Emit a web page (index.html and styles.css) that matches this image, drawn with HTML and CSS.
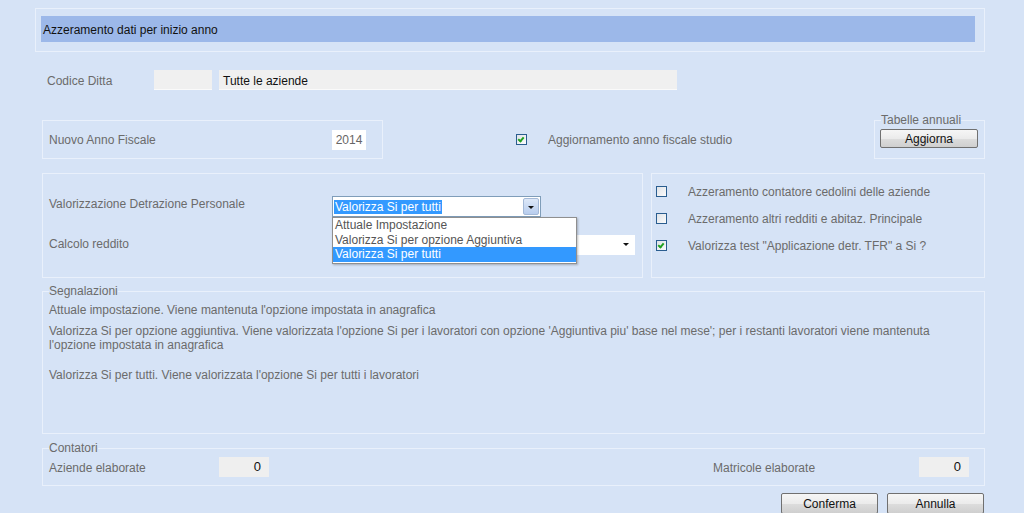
FILE: index.html
```html
<!DOCTYPE html>
<html lang="it">
<head>
    <meta charset="UTF-8">
    <meta name="viewport" content="width=device-width, initial-scale=1.0">
    <title>Azzeramento dati per inizio anno</title>
    <link rel="stylesheet" href="styles.css">
</head>
<body>
    <div class="page">
        <div class="title-panel">
            <div class="title-bar">Azzeramento dati per inizio anno</div>
        </div>

        <div class="row codice-row">
            <span class="label codice-label">Codice Ditta</span>
            <div class="field field-code"></div>
            <div class="field field-name">Tutte le aziende</div>
        </div>

        <div class="row anno-row">
            <div class="panel anno-panel">
                <span class="label">Nuovo Anno Fiscale</span>
                <div class="field-white">2014</div>
            </div>
            <div class="check-item anno-check">
                <span class="checkbox checked"></span>
                <span class="label">Aggiornamento anno fiscale studio</span>
            </div>
            <fieldset class="group tabelle">
                <legend>Tabelle annuali</legend>
                <button class="btn btn-aggiorna">Aggiorna</button>
            </fieldset>
        </div>

        <div class="row options-row">
            <div class="panel options-left">
                <div class="opt-line opt-first">
                    <span class="label opt-label">Valorizzazione Detrazione Personale</span>
                    <div class="combo">
                        <span class="combo-value"><span class="sel">Valorizza Si per tutti</span></span>
                        <span class="combo-arrow"></span>
                        <ul class="dropdown">
                            <li>Attuale Impostazione</li>
                            <li>Valorizza Si per opzione Aggiuntiva</li>
                            <li class="active">Valorizza Si per tutti</li>
                        </ul>
                    </div>
                </div>
                <div class="opt-line opt-second">
                    <span class="label opt-label">Calcolo reddito</span>
                    <div class="combo-flat"><span class="flat-arrow"></span></div>
                </div>
            </div>
            <div class="panel options-right">
                <div class="check-item"><span class="checkbox"></span><span class="label">Azzeramento contatore cedolini delle aziende</span></div>
                <div class="check-item"><span class="checkbox"></span><span class="label">Azzeramento altri redditi e abitaz. Principale</span></div>
                <div class="check-item"><span class="checkbox checked"></span><span class="label">Valorizza test "Applicazione detr. TFR" a Si ?</span></div>
            </div>
        </div>

        <fieldset class="group segnalazioni">
            <legend>Segnalazioni</legend>
            <p class="note n1">Attuale impostazione. Viene mantenuta l'opzione impostata in anagrafica</p>
            <p class="note n2">Valorizza Si per opzione aggiuntiva. Viene valorizzata l'opzione Si per i lavoratori con opzione 'Aggiuntiva piu' base nel mese'; per i restanti lavoratori viene mantenuta<br>l'opzione impostata in anagrafica</p>
            <p class="note">Valorizza Si per tutti. Viene valorizzata l'opzione Si per tutti i lavoratori</p>
        </fieldset>

        <fieldset class="group contatori">
            <legend>Contatori</legend>
            <div class="count-row">
                <span class="label count-label">Aziende elaborate</span>
                <div class="field-num">0</div>
                <span class="label count-label2">Matricole elaborate</span>
                <div class="field-num">0</div>
            </div>
        </fieldset>

        <div class="actions">
            <button class="btn btn-action">Conferma</button>
            <button class="btn btn-action">Annulla</button>
        </div>
    </div>
</body>
</html>
```
FILE: styles.css
```css
body {
    margin: 0;
    background: #d6e3f6;
    font-family: "Liberation Sans", Arial, sans-serif;
    font-size: 12px;
    color: #6b6b6b;
    overflow: hidden;
}
.page {
    padding: 8px 39px 0 35px;
}
.label {
    color: #6b6b6b;
    white-space: nowrap;
}

/* titolo */
.title-panel {
    border: 1px solid #e9f0fb;
    padding: 7px 9px 9px 5px;
}
.title-bar {
    height: 26px;
    line-height: 29px;
    background: #9cb8e9;
    color: #111;
    padding-left: 2px;
}

.row {
    display: flex;
}

/* codice ditta */
.codice-row {
    margin-top: 18px;
    margin-left: 12px;
    height: 20px;
    align-items: center;
}
.codice-label {
    width: 107px;
    padding-top: 2px;
}
.field {
    height: 19px;
    line-height: 22px;
    background: #f0f0f0;
    border-bottom: 1px solid #fafafa;
    color: #111;
}
.field-code {
    width: 58px;
}
.field-name {
    width: 454px;
    margin-left: 7px;
    padding-left: 4px;
}

/* pannelli */
.panel {
    border: 1px solid #e9f0fb;
    box-sizing: border-box;
}
.anno-row {
    margin-top: 30px;
    margin-left: 7px;
    align-items: flex-start;
}
.anno-panel {
    width: 341px;
    height: 39px;
    display: flex;
    align-items: center;
    padding-left: 6px;
}
.anno-panel .label {
    width: 283px;
}
.field-white {
    width: 34px;
    height: 20px;
    line-height: 20px;
    background: #fff;
    text-align: center;
    color: #666;
}
.anno-check {
    margin-left: 133px;
    margin-top: 14px;
}

.check-item {
    display: flex;
    align-items: center;
    height: 11px;
}
.checkbox {
    width: 9px;
    height: 9px;
    border: 1px solid #2a5d8f;
    background: linear-gradient(135deg, #dfe3e8, #fbfbfb);
    margin-right: 21px;
    position: relative;
    flex-shrink: 0;
}
.checkbox.checked::after {
    content: "";
    position: absolute;
    left: 2px;
    top: 1px;
    width: 2px;
    height: 4px;
    border: solid #21a121;
    border-width: 0 2px 2px 0;
    transform: rotate(40deg);
}

fieldset.group {
    margin: 0;
    padding: 0;
    border: 1px solid #e9f0fb;
    min-width: 0;
}
fieldset.group legend {
    padding: 0;
    margin-left: 0;
    line-height: 14px;
    color: #6b6b6b;
}
.tabelle {
    margin-left: auto !important;
    margin-top: -7px !important;
    width: 111px;
    box-sizing: border-box;
    padding: 2px 5px 10px 5px !important;
}
.tabelle legend {
    margin-left: 1px !important;
}

.btn {
    font-family: "Liberation Sans", Arial, sans-serif;
    font-size: 12px;
    color: #111;
    border: 1px solid #707070;
    border-radius: 2px;
    background: linear-gradient(#f6f6f6 0%, #ebebeb 50%, #dddddd 51%, #cfcfcf 100%);
    padding: 0;
    cursor: pointer;
}
.btn-aggiorna {
    width: 98px;
    height: 19px;
    display: block;
}

/* opzioni */
.options-row {
    margin-top: 14px;
    margin-left: 7px;
    gap: 8px;
}
.options-left {
    width: 601px;
    height: 105px;
    padding: 22px 0 0 6px;
}
.opt-line {
    display: flex;
    align-items: center;
}
.opt-label {
    width: 283px;
}
.opt-first {
    height: 21px;
    position: relative;
    z-index: 2;
}
.opt-first .opt-label {
    padding-bottom: 5px;
}
.opt-second {
    margin-top: 18px;
    height: 20px;
}
.opt-second .opt-label {
    padding-bottom: 2px;
}
.combo {
    position: relative;
    width: 209px;
    height: 21px;
    box-sizing: border-box;
    border: 1px solid #7f9db9;
    background: #fff;
    display: flex;
}
.combo-value {
    flex: 1;
    padding: 3px 0 0 1px;
}
.sel {
    background: #3399ff;
    color: #fff;
    padding: 0 1px;
}
.combo-arrow {
    width: 14px;
    margin: 1px;
    border: 1px solid #a4b9d7;
    border-radius: 2px;
    background: linear-gradient(#dde8f8, #b8cdee);
    position: relative;
}
.combo-arrow::after,
.flat-arrow::after {
    content: "";
    position: absolute;
    left: 4px;
    top: 7px;
    border-left: 3px solid transparent;
    border-right: 3px solid transparent;
    border-top: 3px solid #111;
}
.dropdown {
    position: absolute;
    left: -1px;
    top: 20px;
    width: 245px;
    margin: 0;
    padding: 0 0 1px 0;
    list-style: none;
    background: #fff;
    border: 1px solid #8f8f8f;
    box-sizing: border-box;
    box-shadow: 1px 1px 2px rgba(0, 0, 0, 0.25);
    color: #555;
}
.dropdown li {
    line-height: 14.5px;
    padding-left: 2px;
}
.dropdown li.active {
    background: #3399ff;
    color: #fff;
}
.combo-flat {
    width: 303px;
    height: 20px;
    background: #fff;
    position: relative;
}
.flat-arrow {
    position: absolute;
    right: 8px;
    top: 1px;
    width: 8px;
    height: 16px;
}

.options-right {
    width: 334px;
    height: 105px;
    padding: 12px 0 0 4px;
    display: flex;
    flex-direction: column;
    gap: 16px;
}
.options-right .checkbox {
    margin-right: 21px;
}

/* segnalazioni */
.segnalazioni {
    margin-top: 6px !important;
    margin-left: 7px !important;
    height: 150px;
    box-sizing: border-box;
    padding: 5px 0 0 6px !important;
}
.note {
    margin: 0;
    line-height: 14px;
    color: #6b6b6b;
}
.n1 {
    margin-bottom: 7px;
}
.n2 {
    margin-bottom: 16px;
}

/* contatori */
.contatori {
    margin-top: 7px !important;
    margin-left: 7px !important;
    height: 45px;
    box-sizing: border-box;
    padding: 2px 15px 0 6px !important;
}
.count-row {
    display: flex;
    align-items: center;
    height: 20px;
}
.count-label {
    width: 170px;
    padding-top: 2px;
}
.count-label2 {
    margin-left: auto;
    width: 206px;
    padding-top: 2px;
}
.field-num {
    width: 50px;
    height: 20px;
    line-height: 20px;
    background: #efefef;
    color: #111;
    text-align: right;
    padding-right: 8px;
    box-sizing: border-box;
    font-size: 13px;
}

.actions {
    display: flex;
    justify-content: flex-end;
    gap: 9px;
    margin-top: 7px;
    margin-right: 1px;
}
.btn-action {
    width: 97px;
    height: 21px;
}
```
